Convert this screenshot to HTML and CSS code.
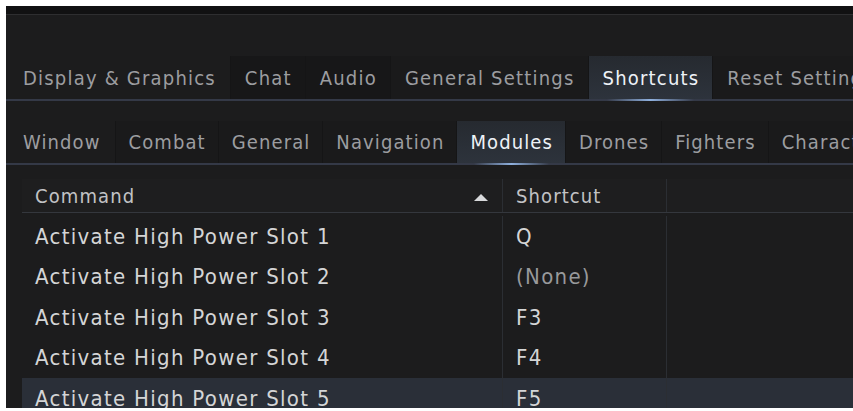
FILE: index.html
```html
<!DOCTYPE html>
<html>
<head>
<meta charset="utf-8">
<link rel="stylesheet" href="styles.css">
</head>
<body>
<div class="window">
  <div class="titlebar"></div>
  <div class="content">
    <div class="tabs tabs-main">
      <div class="tab first">Display &amp; Graphics</div>
      <div class="tab dark">Chat</div>
      <div class="tab dark">Audio</div>
      <div class="tab">General Settings</div>
      <div class="tab selected">Shortcuts</div>
      <div class="tab">Reset Settings</div>
    </div>
    <div class="tabs tabs-sub">
      <div class="tab first">Window</div>
      <div class="tab">Combat</div>
      <div class="tab">General</div>
      <div class="tab">Navigation</div>
      <div class="tab selected">Modules</div>
      <div class="tab">Drones</div>
      <div class="tab">Fighters</div>
      <div class="tab">Character</div>
    </div>
    <div class="table">
      <div class="row header">
        <div class="cell c1">Command<span class="sort"></span></div>
        <div class="cell c2">Shortcut</div>
        <div class="cell c3"></div>
      </div>
      <div class="body">
        <div class="row"><div class="cell c1">Activate High Power Slot 1</div><div class="cell c2">Q</div><div class="cell c3"></div></div>
        <div class="row"><div class="cell c1">Activate High Power Slot 2</div><div class="cell c2 none">(None)</div><div class="cell c3"></div></div>
        <div class="row"><div class="cell c1">Activate High Power Slot 3</div><div class="cell c2">F3</div><div class="cell c3"></div></div>
        <div class="row"><div class="cell c1">Activate High Power Slot 4</div><div class="cell c2">F4</div><div class="cell c3"></div></div>
        <div class="row hl"><div class="cell c1">Activate High Power Slot 5</div><div class="cell c2">F5</div><div class="cell c3"></div></div>
      </div>
    </div>
  </div>
</div>
</body>
</html>
```

FILE: styles.css
```css
html, body {
  margin: 0;
  padding: 0;
  background: #ffffff;
  overflow: hidden;
}
body {
  width: 853px;
  height: 411px;
  font-family: "DejaVu Sans Condensed", "Liberation Sans Narrow", "Roboto", sans-serif;
  font-stretch: condensed;
}
.window {
  margin: 6px 0 0 6px;
  height: 402px;
  background: #1c1c1d;
  overflow: hidden;
  display: flex;
  flex-direction: column;
}
.titlebar {
  height: 8px;
  flex: none;
  background: #111112;
  border-bottom: 1px solid #2e2e30;
}
.content {
  flex: 1;
  display: flex;
  flex-direction: column;
  padding-top: 41px;
  min-height: 0;
}
.tabs {
  display: flex;
  height: 43px;
  flex: none;
  border-bottom: 2px solid #343947;
  white-space: nowrap;
  font-size: 20px;
  letter-spacing: 1.2px;
}
.tabs-sub {
  margin-top: 20px;
  height: 42px;
  letter-spacing: 1.1px;
}
.tab {
  display: flex;
  align-items: center;
  padding: 0 13px 0 14px;
  color: #9c9da0;
  background: #1a1a1b;
  border-right: 1px solid #151516;
  flex: none;
}
.tabs-sub .tab {
  padding: 0 12px 0 13px;
}
.tab.first,
.tabs-sub .tab.first {
  padding-left: 17px;
  padding-right: 14px;
  background: #1c1c1d;
}
.tab.dark {
  background: #171718;
}
.tab.selected {
  color: #eef2f7;
  background: linear-gradient(to bottom, #262a30, #2d333c);
  position: relative;
}
.tab.selected::after {
  content: "";
  position: absolute;
  left: 15%;
  right: 15%;
  bottom: -2px;
  height: 2px;
  background: linear-gradient(to right, rgba(110,140,190,0), #8fb0de, rgba(110,140,190,0));
}
.table {
  margin: 14px 0 0 16px;
  display: flex;
  flex-direction: column;
  font-size: 20px;
  letter-spacing: 1px;
}
.row {
  display: flex;
  height: 40.5px;
  color: #d4d5d6;
  font-size: 22px;
  letter-spacing: 1.3px;
}
.row.header {
  height: 33px;
  background: #1e1e1f;
  border-bottom: 1px solid #34373d;
  color: #c2c3c5;
  font-size: 20px;
  letter-spacing: 1.1px;
}
.body {
  padding-top: 3px;
}
.cell {
  display: flex;
  align-items: center;
  padding-left: 13px;
  flex: none;
  box-sizing: border-box;
}
.c1 {
  width: 481px;
  position: relative;
  border-right: 1px solid #2b2e33;
}
.c2 {
  width: 164px;
  border-right: 1px solid #2b2e33;
}
.c3 {
  flex: 1;
}
.none {
  color: #98999b;
}
.row.hl {
  background: #2a2f38;
}
.sort {
  position: absolute;
  right: 14px;
  top: 15px;
  width: 0;
  height: 0;
  border-left: 7px solid transparent;
  border-right: 7px solid transparent;
  border-bottom: 7px solid #d8d9db;
}
```
